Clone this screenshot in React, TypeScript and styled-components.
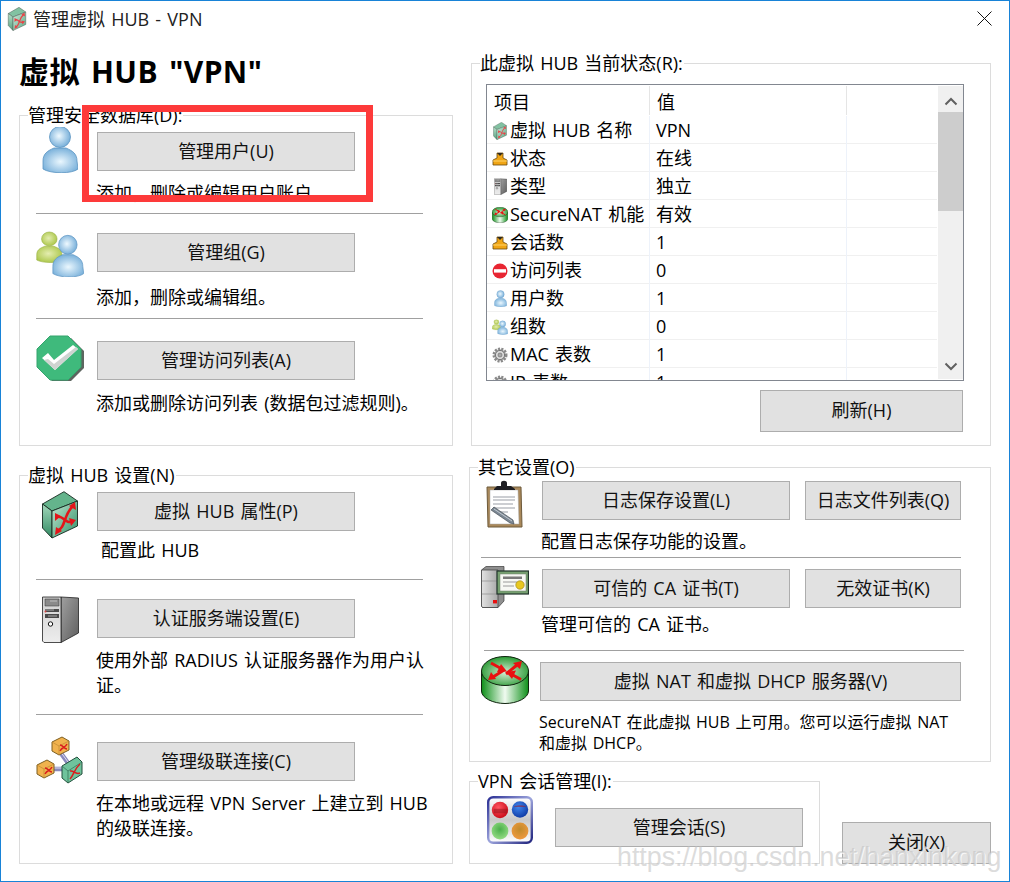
import React from "react";
import styled, { createGlobalStyle } from "styled-components";

const Global = createGlobalStyle`
  html, body { margin: 0; padding: 0; background: #fff; }
  * { box-sizing: border-box; }
`;

const Window = styled.div`
  position: relative;
  width: 1010px;
  height: 882px;
  overflow: hidden;
  background: #fff;
  border: 1px solid #1883d7;
  color: #000;
  font-family: "Open Sans", "Noto Sans CJK SC", sans-serif;
  font-size: 18px;
  word-spacing: 1.5px;
`;
const TitleBar = styled.div`
  height: 36px;
  display: flex;
  align-items: center;
  padding-left: 6px;
  gap: 6px;
  line-height: 24px;
`;
const TitleText = styled.span`
  flex: 1;
  color: #222;
`;
const CloseGlyph = styled.svg`
  width: 15px;
  height: 15px;
  margin-right: 17px;
  margin-bottom: 2px;
`;
const Body = styled.div`
  display: flex;
  padding-left: 18px;
  gap: 16px;
`;
const LeftColumn = styled.div`
  width: 434px;
`;
const RightColumn = styled.div`
  width: 522px;
  display: flex;
  flex-direction: column;
`;
const Heading = styled.h1`
  margin: 15px 0 23px 0;
  font-size: 30px;
  line-height: 40px;
  font-weight: 700;
  letter-spacing: 0.4px;
  word-spacing: 3px;
  white-space: nowrap;
`;
const Group = styled.section<{ $w?: number; $h: number; $mt?: number; $ml?: number; $pl?: number }>`
  position: relative;
  width: ${(p) => p.$w ?? 434}px;
  height: ${(p) => p.$h}px;
  margin-top: ${(p) => p.$mt ?? 0}px;
  margin-left: ${(p) => p.$ml ?? 0}px;
  padding-left: ${(p) => p.$pl ?? 16}px;
  border: 1px solid #dcdcdc;
`;
const Legend = styled.span`
  position: absolute;
  left: 8px;
  top: -13px;
  padding-right: 1px;
  background: #fff;
  line-height: 24px;
  white-space: nowrap;
`;
const Row = styled.div<{ $h: number; $pt: number; $col: number }>`
  display: grid;
  grid-template-columns: ${(p) => p.$col}px 1fr;
  height: ${(p) => p.$h}px;
  padding-top: ${(p) => p.$pt}px;
`;
const IconSlot = styled.div<{ $x: number; $y: number }>`
  margin-left: ${(p) => p.$x}px;
  margin-top: ${(p) => p.$y}px;
  height: 0;
`;
const Content = styled.div`
  min-width: 0;
`;
const Buttons = styled.div`
  display: flex;
  gap: 15px;
`;
const Button = styled.button<{ $w: number; $h?: number }>`
  display: block;
  width: ${(p) => p.$w}px;
  height: ${(p) => p.$h ?? 39}px;
  padding: 0 0 2px;
  background: #e1e1e1;
  border: 1px solid #adadad;
  border-radius: 0;
  color: #111;
  font: inherit;
  word-spacing: inherit;
  line-height: 24px;
  white-space: nowrap;
`;
const Desc = styled.p<{ $gap: number; $indent?: number; $w?: number }>`
  margin: ${(p) => p.$gap}px 0 0 ${(p) => p.$indent ?? -1}px;
  width: ${(p) => p.$w ?? 336}px;
  line-height: 25px;
`;
const SmallDesc = styled.p<{ $gap: number }>`
  margin: ${(p) => p.$gap}px 0 0 -1px;
  width: 420px;
  font-size: 16px;
  line-height: 21px;
`;
const Divider = styled.hr<{ $w: number; $ml?: number }>`
  width: ${(p) => p.$w}px;
  height: 1px;
  margin: 0 0 0 ${(p) => p.$ml ?? 0}px;
  border: 0;
  background: #a0a0a0;
`;
const ListBox = styled.div`
  position: relative;
  width: 478px;
  height: 297px;
  margin-top: 20px;
  border: 1px solid #828790;
  overflow: hidden;
  display: flex;
`;
const ListGrid = styled.div`
  width: 450px;
  flex: none;
`;
const ListHead = styled.div`
  display: grid;
  grid-template-columns: 163px 197px 1fr;
  height: 31px;
  align-items: center;
  line-height: 24px;
`;
const HeadCell = styled.div`
  height: 29px;
  padding: 4px 0 0 7px;
  border-right: 1px solid #e5e5e5;
`;
const ListRow = styled.div`
  display: grid;
  grid-template-columns: 163px 197px 1fr;
  height: 28px;
  border-bottom: 1px solid #f0f0f0;
  line-height: 29px;
  white-space: nowrap;
`;
const NameCell = styled.div`
  display: flex;
  align-items: center;
  gap: 2px;
  padding-left: 5px;
  border-right: 1px solid #edf2fa;
  overflow: hidden;
`;
const IconBox = styled.span`
  width: 16px;
  flex: none;
  display: flex;
  justify-content: center;
`;
const ValueCell = styled.div`
  padding-left: 6px;
  border-right: 1px solid #edf2fa;
`;
const Blank = styled.div``;
const Scrollbar = styled.div`
  width: 25px;
  margin: 1px 0 1px 1px;
  background: #f0f0f0;
  display: flex;
  flex-direction: column;
  align-items: center;
`;
const ScrollArrow = styled.svg<{ $mt: number }>`
  width: 14px;
  height: 9px;
  margin-top: ${(p) => p.$mt}px;
  flex: none;
`;
const Thumb = styled.div`
  width: 100%;
  height: 99px;
  margin-top: 6px;
  background: #cdcdcd;
`;
const RefreshButton = styled(Button)`
  margin: 9px 0 0 274px;
`;
const BottomRow = styled.div`
  display: flex;
  gap: 22px;
  margin-top: 19px;
`;
const CloseButton = styled(Button)`
  margin-top: 41px;
  flex: none;
`;
const RedMark = styled.div`
  position: absolute;
  left: 81px;
  top: 104px;
  width: 291px;
  height: 97px;
  border: 7px solid #fd3a3a;
  pointer-events: none;
`;
const Watermark = styled.div`
  position: absolute;
  left: 616px;
  top: 840px;
  font-family: "Liberation Sans", sans-serif;
  font-size: 26.8px;
  line-height: 32px;
  word-spacing: 0;
  white-space: nowrap;
  color: rgba(190, 190, 190, 0.55);
  text-shadow: 1px 1px 0 rgba(255, 255, 255, 0.75);
  pointer-events: none;
`;
const WindowGlyphHolder = styled.span`
  display: inline-flex;
  width: 20px;
  justify-content: center;
`;

const Blue = () => (
  <defs>
    <radialGradient id="uh" cx="45%" cy="45%" r="60%">
      <stop offset="0" stopColor="#eef9ff" />
      <stop offset="1" stopColor="#6ea9d6" />
    </radialGradient>
    <radialGradient id="ub" cx="50%" cy="55%" r="60%">
      <stop offset="0" stopColor="#eaf7fe" />
      <stop offset="1" stopColor="#72acd8" />
    </radialGradient>
    <radialGradient id="ug" cx="45%" cy="45%" r="65%">
      <stop offset="0" stopColor="#e4edb0" />
      <stop offset="1" stopColor="#a4c23c" />
    </radialGradient>
  </defs>
);

const UserShape = ({ fillH = "url(#uh)", fillB = "url(#ub)", line = "#5c94c2" }) => (
  <g stroke={line} strokeWidth="0.8">
    <path d="M1 36C1 29 5 26 12 23L24 23C31 26 35 29 35 36L36 44C30 49 9 49 1 44Z" fill={fillB} />
    <circle cx="18" cy="12" r="10.5" fill={fillH} />
  </g>
);

const UserIcon = ({ w = 36, h = 48 }: { w?: number; h?: number }) => (
  <svg width={w} height={h} viewBox="0 0 36 48">
    <Blue />
    <UserShape />
  </svg>
);

const GroupIcon = ({ w = 48, h = 46 }: { w?: number; h?: number }) => (
  <svg width={w} height={h} viewBox="0 0 48 46">
    <Blue />
    <g transform="scale(.74 .66)">
      <UserShape fillH="url(#ug)" fillB="url(#ug)" line="#94ad3a" />
    </g>
    <g transform="translate(16 3) scale(.88 .9)">
      <UserShape />
    </g>
  </svg>
);

const CheckIcon = () => (
  <svg width="48" height="48" viewBox="0 0 48 48">
    <path d="M16 3H35L48 16V33L35 46H16L3 33V16Z" fill="#5d6660" />
    <path d="M14 1H32L45 14V32L32 45H14L1 32V14Z" fill="#3fba7c" stroke="#35a46d" />
    <path d="M6 23L12 18L18 25L37 10L42 14L19 35Z" fill="#fff" />
    <path d="M12 24L18 29L40 12L42 14L19 35L8 25Z" fill="#cfd4d1" />
  </svg>
);

const HubIcon = ({ w = 36, h = 48, soft = false }: { w?: number; h?: number; soft?: boolean }) => (
  <svg width={w} height={h} viewBox="0 0 36 48" opacity={soft ? 0.8 : 1}>
    <defs>
      <linearGradient id="hr" x1="0" y1="0" x2="1" y2="1">
        <stop offset="0" stopColor="#c4e6d2" />
        <stop offset="1" stopColor="#2f9268" />
      </linearGradient>
      <linearGradient id="hl" x1="0" y1="0" x2="0" y2="1">
        <stop offset="0" stopColor="#a2d8bb" />
        <stop offset="1" stopColor="#2f8a62" />
      </linearGradient>
    </defs>
    <path d="M0.5 13L22 0.7L35.5 10L10 20Z" fill="#64b48c" stroke="#16291f" strokeWidth="0.9" />
    <path d="M0.5 13L10 20V47L0.5 37Z" fill="url(#hl)" stroke="#16291f" strokeWidth="0.9" />
    <path d="M10 20L35.5 10V35L10 47Z" fill="url(#hr)" stroke="#16291f" strokeWidth="0.9" />
    <g fill="none" stroke="#e3151a" strokeWidth="2.6">
      <path d="M15 26C22 24 23 34 31 30" />
      <path d="M15 40C24 37 21 24 31 15" />
    </g>
    <g fill="#e3151a">
      <path d="M33 11L34 19L27 15Z" />
      <path d="M34 29L29 35L27 27Z" />
      <path d="M13 22L19 25L13 30Z" />
      <path d="M13 44L14 36L20 40Z" />
    </g>
  </svg>
);

const ServerIcon = ({ w = 37, h = 48 }: { w?: number; h?: number }) => (
  <svg width={w} height={h} viewBox="0 0 37 48">
    <defs>
      <linearGradient id="sf" x1="0" y1="0" x2="0" y2="1">
        <stop offset="0" stopColor="#cfcfcf" />
        <stop offset="1" stopColor="#ededed" />
      </linearGradient>
      <linearGradient id="ss" x1="0" y1="0" x2="1" y2="1">
        <stop offset="0" stopColor="#a0a0a0" />
        <stop offset="1" stopColor="#5e5e5e" />
      </linearGradient>
    </defs>
    <path d="M19 2L36.5 3V38L19 47.5Z" fill="url(#ss)" stroke="#222" strokeWidth="0.8" />
    <path d="M0.5 2H19V47.5H2L0.5 46Z" fill="url(#sf)" stroke="#222" strokeWidth="0.8" />
    <path d="M3 4H17V11H3Z" fill="#8a8a8a" stroke="#333" strokeWidth="0.5" />
    <path d="M3 14H17V17H3ZM3 19H17V23H3Z" fill="#4a4a4a" />
    <path d="M8 6H15M3 15H12M6 21H15" stroke="#d4d4d4" strokeWidth="0.7" />
    <circle cx="3.5" cy="16.5" r="1" fill="#d64040" />
    <circle cx="8.5" cy="29" r="2.2" fill="#fff" stroke="#111" />
  </svg>
);

const CascadeIcon = () => (
  <svg width="48" height="48" viewBox="0 0 48 48">
    <path d="M24 16L32 27M14 33H28" stroke="#8989bd" strokeWidth="4.5" />
    <path d="M24 15L32 26M15 32H28" stroke="#dfe0f0" strokeWidth="1" />
    <path d="M16 6L26 1L33 5V14L23 19L16 15Z" fill="#f0b24e" stroke="#7d5f22" />
    <path d="M16 6L23 10L33 5M23 10V19" fill="none" stroke="#c08a30" strokeWidth="0.7" />
    <path d="M1 29L11 24L18 28V37L8 42L1 38Z" fill="#f0b24e" stroke="#7d5f22" />
    <path d="M1 29L8 33L18 28M8 33V42" fill="none" stroke="#c08a30" strokeWidth="0.7" />
    <path d="M26 30L41 21L46 26V38L32 47L26 42Z" fill="#6fc39c" stroke="#234f3c" />
    <path d="M26 30L32 35L46 26M32 35V47" fill="none" stroke="#2f6d52" strokeWidth="0.7" />
    <g fill="none" stroke="#d91e1e" strokeWidth="1.5">
      <path d="M24 15C26 11 29 12 31 8M24 9C27 9 28 13 31 13" />
      <path d="M9 38C11 34 14 35 16 31M9 32C12 32 13 36 16 36" />
      <path d="M34 43C38 39 38 33 44 28M34 35C38 34 39 39 44 37" />
    </g>
  </svg>
);

const ClipboardIcon = () => (
  <svg width="37" height="48" viewBox="0 0 37 48">
    <path d="M1 7H35L36 47H2Z" fill="#a9885a" stroke="#6d5a3b" />
    <path d="M4 10H32L33 44H4Z" fill="#fff" stroke="#a8a8a8" strokeWidth="0.5" />
    <path d="M7 17H29M7 20H29M7 24H27M7 28H29M10 32H22" stroke="#bcbec4" strokeWidth="1.5" />
    <path d="M8 9L11 6H15V3C15 0 21 0 21 3V6H25L29 9V10H8Z" fill="#1e1e22" />
    <path d="M5 30L8 27L27 40L28 44L24 43Z" fill="#7b8793" stroke="#3c434a" strokeWidth="0.6" />
    <path d="M8 29L26 41" stroke="#d8dde2" strokeWidth="0.8" />
  </svg>
);

const CertIcon = () => (
  <svg width="48" height="42" viewBox="0 0 48 42">
    <defs>
      <linearGradient id="cs" x1="0" y1="0" x2="1" y2="0">
        <stop offset="0" stopColor="#e2e2e2" />
        <stop offset="1" stopColor="#a8a8a8" />
      </linearGradient>
    </defs>
    <path d="M0.5 4L5 0.5H23V35L17 41.5H1.5L0.5 40Z" fill="#8f8f8f" stroke="#3a3a3a" strokeWidth="0.7" />
    <path d="M0.5 4H17V41.5H1.5L0.5 40Z" fill="url(#cs)" stroke="#3a3a3a" strokeWidth="0.7" />
    <path d="M1 15H17M1 28H17" stroke="#8c8c8c" strokeWidth="0.7" />
    <rect x="16" y="5" width="31.5" height="23" fill="#76a070" stroke="#20332a" strokeWidth="1.2" />
    <rect x="19" y="8" width="26" height="17" fill="#f7f8f4" stroke="#70806e" strokeWidth="0.5" />
    <path d="M22 10.5H41V13H22Z" fill="#7a7a7a" />
    <path d="M22 16H36M22 20H33" stroke="#9a9a9a" />
    <circle cx="39" cy="19" r="4.2" fill="#e8c820" stroke="#a08a18" strokeWidth="0.7" />
    <rect x="12" y="34" width="4" height="3.4" fill="#e80f0f" />
  </svg>
);

const RouterIcon = ({ w = 48, h = 48 }: { w?: number; h?: number }) => (
  <svg width={w} height={h} viewBox="0 0 48 48">
    <defs>
      <linearGradient id="rb" x1="0" y1="0" x2="1" y2="0">
        <stop offset="0" stopColor="#0d8f18" />
        <stop offset="0.5" stopColor="#f0fbf0" />
        <stop offset="1" stopColor="#0d8f18" />
      </linearGradient>
      <radialGradient id="rt" cx="50%" cy="55%" r="55%">
        <stop offset="0" stopColor="#d4ecd4" />
        <stop offset="1" stopColor="#2a9a34" />
      </radialGradient>
    </defs>
    <path d="M0.5 15V35C0.5 42 12 47.5 24 47.5S47.5 42 47.5 35V15Z" fill="url(#rb)" stroke="#10240f" />
    <ellipse cx="24" cy="15" rx="23.5" ry="14.5" fill="url(#rt)" stroke="#10240f" />
    <g stroke="#ea1010" strokeWidth="3" fill="none">
      <path d="M10 7L20 12.5M40 23.5L30 18M25 18L36 9M23 14L12 21" />
    </g>
    <g fill="#ea1010">
      <path d="M26 15.5L16 16L20 8Z" />
      <path d="M25 16L35 14.5L31 23Z" />
      <path d="M41 5L39 13L32 7Z" />
      <path d="M7 24L10 16L15 23Z" />
    </g>
  </svg>
);

const SessionsIcon = () => (
  <svg width="46" height="48" viewBox="0 0 46 48">
    <defs>
      <linearGradient id="sb" x1="0" y1="0" x2="0" y2="1">
        <stop offset="0" stopColor="#fefeff" />
        <stop offset="0.5" stopColor="#c9c9c9" />
        <stop offset="1" stopColor="#ffffff" />
      </linearGradient>
      <linearGradient id="sfr" x1="0" y1="0" x2="1" y2="1">
        <stop offset="0" stopColor="#2a2f94" />
        <stop offset="0.5" stopColor="#9ca4dc" />
        <stop offset="1" stopColor="#20247e" />
      </linearGradient>
      <radialGradient id="s1" cx="40%" cy="35%" r="65%">
        <stop offset="0" stopColor="#ff5560" />
        <stop offset="1" stopColor="#cc0f1c" />
      </radialGradient>
      <radialGradient id="s2" cx="40%" cy="35%" r="65%">
        <stop offset="0" stopColor="#3f86ee" />
        <stop offset="1" stopColor="#123fa8" />
      </radialGradient>
      <radialGradient id="s3" cx="50%" cy="40%" r="65%">
        <stop offset="0" stopColor="#4aaf4a" />
        <stop offset="1" stopColor="#9adf88" />
      </radialGradient>
      <radialGradient id="s4" cx="50%" cy="40%" r="65%">
        <stop offset="0" stopColor="#c08a2a" />
        <stop offset="1" stopColor="#f29a40" />
      </radialGradient>
    </defs>
    <rect x="1.2" y="1.2" width="43.6" height="45.6" rx="5" fill="url(#sb)" stroke="url(#sfr)" strokeWidth="2.4" />
    <circle cx="13" cy="14" r="8.2" fill="url(#s1)" />
    <circle cx="33" cy="13.5" r="8.2" fill="url(#s2)" />
    <circle cx="13" cy="35" r="8.4" fill="url(#s3)" />
    <circle cx="33" cy="35" r="8.4" fill="url(#s4)" />
    <path d="M7 13H20V17H7ZM27 11C29 9 37 9 39 11" fill="#9e1720" opacity="0.55" stroke="#9e1720" strokeWidth="0.4" />
  </svg>
);

const OrangeIcon = () => (
  <svg width="16" height="14" viewBox="0 0 16 14">
    <path d="M5 1H11V6L15 8V13H1V8L5 6Z" fill="#f0a515" stroke="#6b4a0c" strokeWidth="0.8" />
    <path d="M5 1H11L8 4Z" fill="#2e2a20" />
    <path d="M1 9H15" stroke="#ffd56d" />
  </svg>
);

const StopIcon = () => (
  <svg width="16" height="16" viewBox="0 0 16 16">
    <circle cx="8" cy="8" r="7.5" fill="#e82532" />
    <rect x="2" y="6.2" width="12" height="3.4" fill="#fff" />
  </svg>
);

const GearIcon = () => (
  <svg width="16" height="16" viewBox="0 0 16 16">
    <circle cx="8" cy="8" r="6" fill="#c2c2c2" stroke="#8a8a8a" strokeWidth="3" strokeDasharray="2 1.2" />
    <circle cx="8" cy="8" r="4.6" fill="#d9d9d9" stroke="#777" />
    <circle cx="8" cy="8" r="2" fill="#a9a9a9" stroke="#666" strokeWidth="0.6" />
  </svg>
);

const listRows: [React.ReactNode, string, string][] = [
  [<HubIcon w={14} h={18} soft />, "虚拟 HUB 名称", "VPN"],
  [<OrangeIcon />, "状态", "在线"],
  [<ServerIcon w={13} h={17} />, "类型", "独立"],
  [<RouterIcon w={16} h={16} />, "SecureNAT 机能", "有效"],
  [<OrangeIcon />, "会话数", "1"],
  [<StopIcon />, "访问列表", "0"],
  [<UserIcon w={13} h={17} />, "用户数", "1"],
  [<GroupIcon w={16} h={16} />, "组数", "0"],
  [<GearIcon />, "MAC 表数", "1"],
  [<GearIcon />, "IP 表数", "1"],
];

export default function App() {
  return (
    <Window>
      <Global />
      <TitleBar>
        <WindowGlyphHolder>
          <HubIcon w={20} h={24} soft />
        </WindowGlyphHolder>
        <TitleText>管理虚拟 HUB - VPN</TitleText>
        <CloseGlyph viewBox="0 0 15 15">
          <path d="M0.5 0.5L14.5 14.5M14.5 0.5L0.5 14.5" stroke="#111" fill="none" />
        </CloseGlyph>
      </TitleBar>
      <Body>
        <LeftColumn>
          <Heading>虚拟 HUB "VPN"</Heading>
          <Group $h={331}>
            <Legend>管理安全数据库(D):</Legend>
            <Row $h={97} $pt={16} $col={61}>
              <IconSlot $x={6} $y={-7}>
                <UserIcon />
              </IconSlot>
              <Content>
                <Button $w={258}>管理用户(U)</Button>
                <Desc $gap={10}>添加，删除或编辑用户账户</Desc>
              </Content>
            </Row>
            <Divider $w={387} />
            <Row $h={104} $pt={19} $col={61}>
              <IconSlot $x={0} $y={-2}>
                <GroupIcon />
              </IconSlot>
              <Content>
                <Button $w={258}>管理组(G)</Button>
                <Desc $gap={13}>添加，删除或编辑组。</Desc>
              </Content>
            </Row>
            <Divider $w={387} />
            <Row $h={100} $pt={22} $col={61}>
              <IconSlot $x={0} $y={-6}>
                <CheckIcon />
              </IconSlot>
              <Content>
                <Button $w={258}>管理访问列表(A)</Button>
                <Desc $gap={11}>添加或删除访问列表 (数据包过滤规则)。</Desc>
              </Content>
            </Row>
          </Group>
          <Group $h={389} $mt={29}>
            <Legend>虚拟 HUB 设置(N)</Legend>
            <Row $h={103} $pt={16} $col={61}>
              <IconSlot $x={6} $y={-1}>
                <HubIcon />
              </IconSlot>
              <Content>
                <Button $w={258}>虚拟 HUB 属性(P)</Button>
                <Desc $gap={7} $indent={4}>
                  配置此 HUB
                </Desc>
              </Content>
            </Row>
            <Divider $w={387} />
            <Row $h={134} $pt={19} $col={61}>
              <IconSlot $x={6} $y={-4}>
                <ServerIcon />
              </IconSlot>
              <Content>
                <Button $w={258}>认证服务端设置(E)</Button>
                <Desc $gap={10}>使用外部 RADIUS 认证服务器作为用户认证。</Desc>
              </Content>
            </Row>
            <Divider $w={387} />
            <Row $h={120} $pt={27} $col={61}>
              <IconSlot $x={0} $y={-6}>
                <CascadeIcon />
              </IconSlot>
              <Content>
                <Button $w={258}>管理级联连接(C)</Button>
                <Desc $gap={10}>在本地或远程 VPN Server 上建立到 HUB 的级联连接。</Desc>
              </Content>
            </Row>
          </Group>
        </LeftColumn>
        <RightColumn>
          <Group $w={520} $h={383} $mt={26} $ml={2} $pl={14}>
            <Legend>此虚拟 HUB 当前状态(R):</Legend>
            <ListBox>
              <ListGrid>
                <ListHead>
                  <HeadCell>项目</HeadCell>
                  <HeadCell>值</HeadCell>
                  <Blank />
                </ListHead>
                {listRows.map(([icon, name, value]) => (
                  <ListRow key={name}>
                    <NameCell>
                      <IconBox>{icon}</IconBox>
                      {name}
                    </NameCell>
                    <ValueCell>{value}</ValueCell>
                    <Blank />
                  </ListRow>
                ))}
              </ListGrid>
              <Scrollbar>
                <ScrollArrow $mt={11} viewBox="0 0 14 9">
                  <path d="M1.5 7.5L7 2L12.5 7.5" fill="none" stroke="#606060" strokeWidth="2" />
                </ScrollArrow>
                <Thumb />
                <ScrollArrow $mt={151} viewBox="0 0 14 9">
                  <path d="M1.5 1.5L7 7L12.5 1.5" fill="none" stroke="#606060" strokeWidth="2" />
                </ScrollArrow>
              </Scrollbar>
            </ListBox>
            <RefreshButton $w={203} $h={42}>
              刷新(H)
            </RefreshButton>
          </Group>
          <Group $w={522} $h={295} $mt={21} $pl={11}>
            <Legend>其它设置(O)</Legend>
            <Row $h={89} $pt={13} $col={61}>
              <IconSlot $x={5} $y={-1}>
                <ClipboardIcon />
              </IconSlot>
              <Content>
                <Buttons>
                  <Button $w={248}>日志保存设置(L)</Button>
                  <Button $w={156}>日志文件列表(Q)</Button>
                </Buttons>
                <Desc $gap={9} $w={410}>
                  配置日志保存功能的设置。
                </Desc>
              </Content>
            </Row>
            <Divider $w={480} />
            <Row $h={92} $pt={11} $col={61}>
              <IconSlot $x={0} $y={-3}>
                <CertIcon />
              </IconSlot>
              <Content>
                <Buttons>
                  <Button $w={248}>可信的 CA 证书(T)</Button>
                  <Button $w={156}>无效证书(K)</Button>
                </Buttons>
                <Desc $gap={4} $w={410}>
                  管理可信的 CA 证书。
                </Desc>
              </Content>
            </Row>
            <Divider $w={480} $ml={3} />
            <Row $h={100} $pt={11} $col={59}>
              <IconSlot $x={0} $y={-6}>
                <RouterIcon />
              </IconSlot>
              <Content>
                <Button $w={421}>虚拟 NAT 和虚拟 DHCP 服务器(V)</Button>
                <SmallDesc $gap={11}>SecureNAT 在此虚拟 HUB 上可用。您可以运行虚拟 NAT 和虚拟 DHCP。</SmallDesc>
              </Content>
            </Row>
          </Group>
          <BottomRow>
            <Group $w={351} $h={83} $pl={17}>
              <Legend>VPN 会话管理(I):</Legend>
              <Row $h={81} $pt={26} $col={68}>
                <IconSlot $x={0} $y={-12}>
                  <SessionsIcon />
                </IconSlot>
                <Content>
                  <Button $w={248}>管理会话(S)</Button>
                </Content>
              </Row>
            </Group>
            <CloseButton $w={149} $h={42}>
              关闭(X)
            </CloseButton>
          </BottomRow>
        </RightColumn>
      </Body>
      <RedMark />
      <Watermark>https://blog.csdn.net/hanxinkong</Watermark>
    </Window>
  );
}
